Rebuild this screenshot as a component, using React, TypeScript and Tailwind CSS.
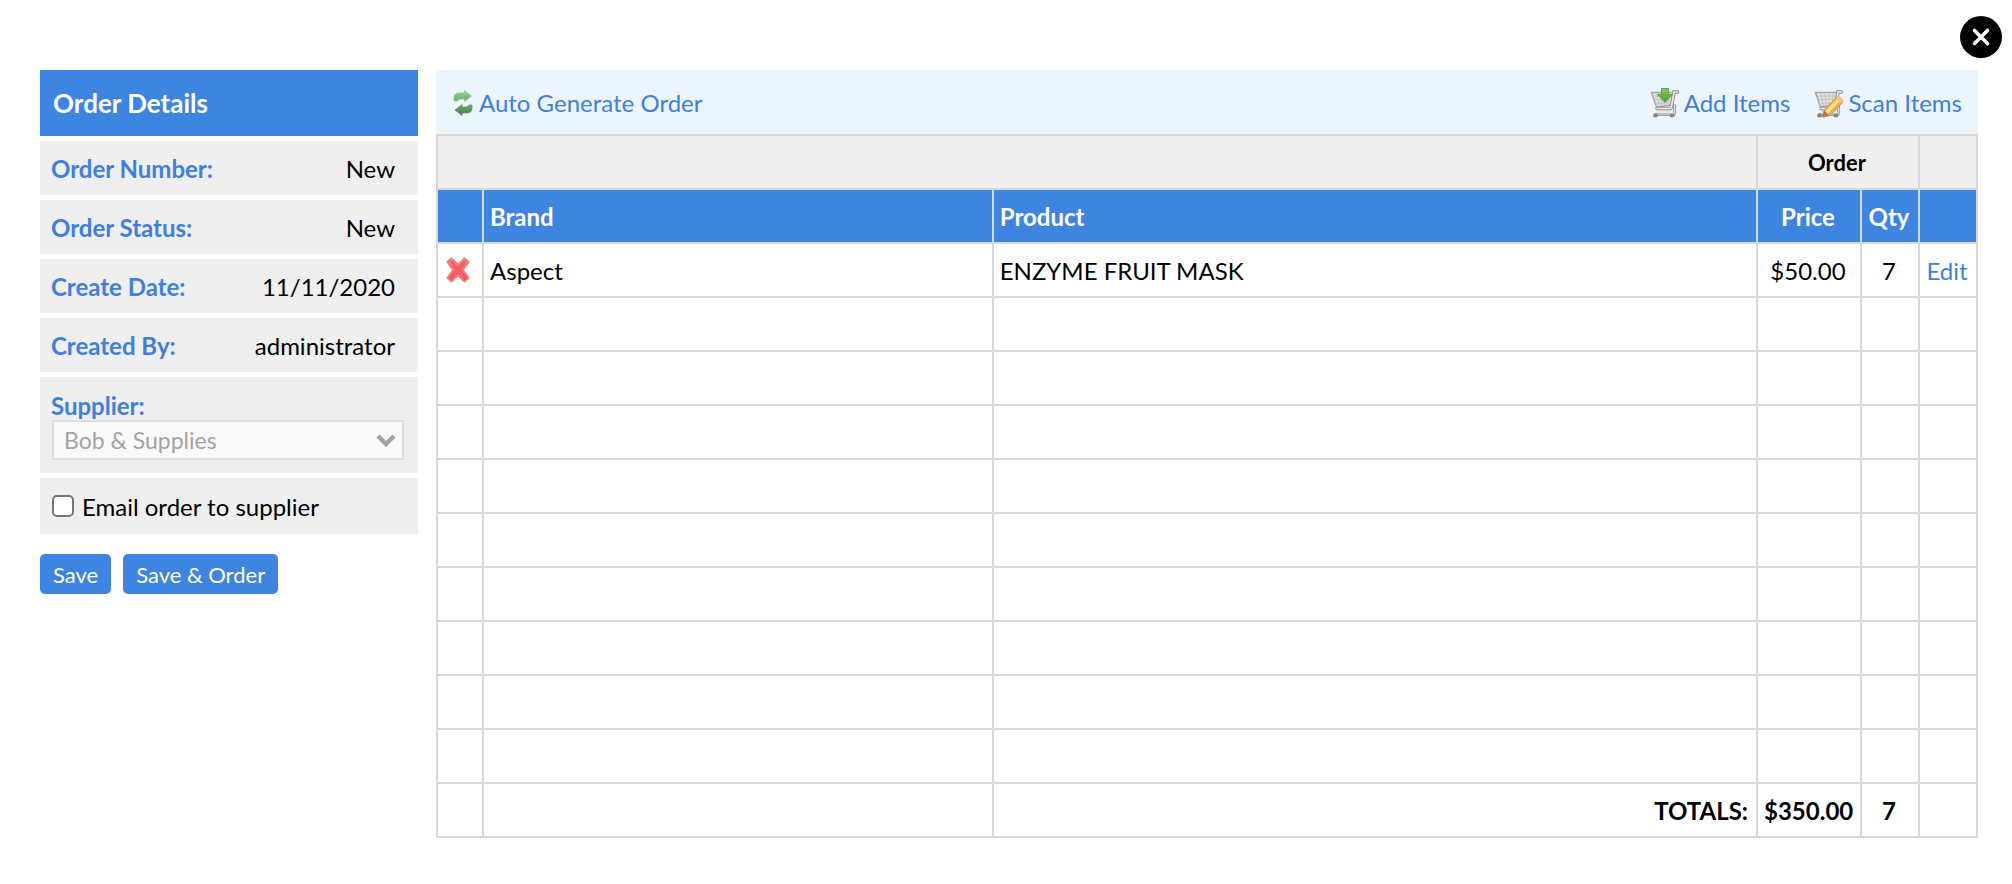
import { useState } from 'react';

interface OrderItem {
  brand: string;
  product: string;
  price: number;
  qty: number;
}

const MIN_ROWS = 10;

const details = [
  { label: 'Order Number:', value: 'New' },
  { label: 'Order Status:', value: 'New' },
  { label: 'Create Date:', value: '11/11/2020' },
  { label: 'Created By:', value: 'administrator' },
];

const initialItems: OrderItem[] = [
  { brand: 'Aspect', product: 'ENZYME FRUIT MASK', price: 50, qty: 7 },
];

const money = (n: number) => `$${n.toFixed(2)}`;

function CloseIcon() {
  return (
    <svg viewBox="0 0 42 42" className="size-[42px]" aria-hidden="true">
      <circle cx="21" cy="21" r="21" fill="#000" />
      <path d="M14.500 14.500l13 13M27.500 14.500l-13 13" stroke="#fff" strokeWidth="3.600" strokeLinecap="round" />
    </svg>
  );
}

function RefreshIcon() {
  return (
    <svg viewBox="0 0 20 26" className="w-5 h-[26px]" aria-hidden="true">
      <defs>
        <linearGradient id="refreshTop" x1="0" y1="0" x2="0" y2="1">
          <stop offset="0" stopColor="#a5dba0" />
          <stop offset="1" stopColor="#63a95f" />
        </linearGradient>
        <linearGradient id="refreshBottom" x1="0" y1="0" x2="0" y2="1">
          <stop offset="0" stopColor="#6db069" />
          <stop offset="1" stopColor="#377f3a" />
        </linearGradient>
      </defs>
      <path
        d="M1 11V7.500Q1.500 3 6 3h5.500V.5l7 5.500-7 5.500V9H7.500Q5 9 4.500 11Z"
        fill="url(#refreshTop)"
        stroke="#8cc489"
        strokeWidth="0.800"
      />
      <path
        d="M19 15v3.500q-.5 4.500-5 4.500H9v2.500L2 20l7-5.500V17h3.500q3 0 3.500-2Z"
        fill="url(#refreshBottom)"
        stroke="#5b9c5b"
        strokeWidth="0.800"
      />
    </svg>
  );
}

function Cart() {
  return (
    <g>
      <path d="M1.500 5.500H23l-2 12.500-14.500 2Z" fill="#e3e3e3" stroke="#a6a6a6" strokeWidth="1.500" />
      <path
        d="M4 9h17M5 12.500h15M6.500 16h13M7 7l2 11M11 7l1 11M15 7v11M19 7l-1 10"
        stroke="#c2c2c2"
        strokeWidth="1"
        fill="none"
      />
      <path d="M6 21h15.500v7H6.500Z" fill="#e6e6e6" />
      <path d="M27.500 5h-3.500l-2.500 14.500q-.3 2-2 2H7" stroke="#909090" strokeWidth="3.600" strokeLinecap="round" fill="none" />
      <path d="M27.500 5h-3.500l-2.500 14.500q-.3 2-2 2H7" stroke="#ececec" strokeWidth="1.600" strokeLinecap="round" fill="none" />
      <path d="M24.500 18.500v7q0 2-2 2H5.500" stroke="#a0a0a0" strokeWidth="3.200" strokeLinecap="round" fill="none" />
      <path d="M24.500 18.500v7q0 1.500-2 1.500H7" stroke="#dedede" strokeWidth="1.200" strokeLinecap="round" fill="none" />
      <ellipse cx="5.500" cy="28.500" rx="2.500" ry="2" fill="#858585" />
      <ellipse cx="22" cy="28.500" rx="2.500" ry="2" fill="#858585" />
    </g>
  );
}

function CartAddIcon() {
  return (
    <svg viewBox="0 0 30 32" className="w-[30px] h-8" aria-hidden="true">
      <defs>
        <linearGradient id="addArrow" x1="0" y1="0" x2="0" y2="1">
          <stop offset="0" stopColor="#8cc861" />
          <stop offset="1" stopColor="#4d9c36" />
        </linearGradient>
      </defs>
      <Cart />
      <path d="M11.500 1.500h7v6h4L15 15.500 7.500 7.500h4Z" fill="url(#addArrow)" stroke="#64a04d" strokeWidth="1" />
    </svg>
  );
}

function CartEditIcon() {
  return (
    <svg viewBox="0 0 30 32" className="w-[30px] h-8" aria-hidden="true">
      <Cart />
      <path
        d="M9 30l1-6.500L22.500 10.500q1.500-1.500 3.500 0l2 2q1.500 2 0 3.500L16 28.500Z"
        fill="#efae4c"
        stroke="#cf9147"
        strokeWidth="1"
      />
      <path d="M13.500 24.500L24 13.500" stroke="#ffe08a" strokeWidth="3.500" strokeLinecap="round" />
      <path d="M8 30.500l2-7 5.500 5Z" fill="#b07c46" />
      <path d="M22 11l1.500-1.200q2-1.300 4 .7t1 4.500l-1.500 1.500Z" fill="#f3bf8c" />
    </svg>
  );
}

function DeleteIcon() {
  return (
    <svg viewBox="0 0 24 26" className="w-6 h-[26px]" aria-hidden="true">
      <defs>
        <linearGradient id="deleteCross" x1="0" y1="0" x2="0" y2="1">
          <stop offset="0" stopColor="#fb8585" />
          <stop offset="1" stopColor="#ea4147" />
        </linearGradient>
      </defs>
      <path
        d="M5.500 1.500L12 8l6.500-6.500L22.500 5 17 13l5.500 8-4 3.500L12 18l-6.500 6.500L1.500 21 7 13 1.500 5Z"
        fill="url(#deleteCross)"
        stroke="#f47c7e"
        strokeWidth="2"
        strokeLinejoin="round"
      />
      <path d="M6 5.500l12 15M18 5.500l-12 15" stroke="#f55f63" strokeWidth="3" strokeLinecap="round" />
    </svg>
  );
}

function OrderDetails() {
  const [emailSupplier, setEmailSupplier] = useState(false);

  return (
    <aside className="w-[378px] shrink-0">
      <h2 className="h-[66px] pl-[13px] flex items-center bg-[#3e85e2] text-white text-[26px] font-bold">
        Order Details
      </h2>

      <dl className="mt-[5px] space-y-[5px]">
        {details.map((d) => (
          <div key={d.label} className="h-[54px] pt-0.5 pl-[11px] pr-[23px] flex items-center justify-between bg-[#efefef]">
            <dt className="text-[#3e7fe2] font-bold">{d.label}</dt>
            <dd>{d.value}</dd>
          </div>
        ))}
      </dl>

      <div className="mt-[5px] h-24 px-3 pt-[15px] bg-[#efefef]">
        <label htmlFor="supplier" className="-ml-px block leading-7 text-[#3e7fe2] font-bold">
          Supplier:
        </label>
        <div className="relative mr-[2px]">
          <select
            id="supplier"
            disabled
            className="block w-full h-10 pl-[10px] appearance-none border-2 border-[#dedede] bg-[#fafafa] text-[23px] text-[#a3a3a3] opacity-100"
          >
            <option>Bob &amp; Supplies</option>
          </select>
          <svg viewBox="0 0 20 13" className="absolute right-2 top-3.5 w-5 h-[13px] pointer-events-none" aria-hidden="true">
            <path d="M2 2l8 8 8-8" fill="none" stroke="#a3a3a3" strokeWidth="4.500" />
          </svg>
        </div>
      </div>

      <div className="mt-[5px] h-14 px-3 flex items-center gap-2 bg-[#efefef]">
        <input
          id="email-supplier"
          type="checkbox"
          checked={emailSupplier}
          onChange={(e) => setEmailSupplier(e.target.checked)}
          className="size-[22px] appearance-none rounded-[5px] border-2 border-[#767676] bg-white checked:bg-[#3e85e2]"
        />
        <label htmlFor="email-supplier" className="pt-0.5">
          Email order to supplier
        </label>
      </div>

      <div className="mt-5 flex gap-3 text-[22px] text-white">
        <button type="button" className="h-10 px-[13px] pt-0.5 rounded-[5px] bg-[#3e85e2]">
          Save
        </button>
        <button type="button" className="h-10 px-[13px] pt-0.5 rounded-[5px] bg-[#3e85e2]">
          Save &amp; Order
        </button>
      </div>
    </aside>
  );
}

function OrderTable() {
  const [items, setItems] = useState(initialItems);

  const totalQty = items.reduce((sum, i) => sum + i.qty, 0);
  const totalPrice = items.reduce((sum, i) => sum + i.qty * i.price, 0);
  const emptyRows = Math.max(0, MIN_ROWS - items.length);

  const cell = 'border-2 border-[#d8d8d8] pt-0.5 pl-1.5 pr-2';

  return (
    <table className="w-full table-fixed border-collapse">
      <colgroup>
        <col className="w-[46px]" />
        <col className="w-[33.1%]" />
        <col />
        <col className="w-[104px]" />
        <col className="w-[58px]" />
        <col className="w-[58px]" />
      </colgroup>
      <thead>
        <tr className="h-[54px] bg-[#efefef]">
          <td colSpan={3} className={cell} />
          <th colSpan={2} className={`${cell} text-[22px] font-bold`}>
            Order
          </th>
          <td className={cell} />
        </tr>
        <tr className="h-[54px] bg-[#3e85e2] text-white font-bold">
          <td className={cell} />
          <th className={`${cell} text-left`}>Brand</th>
          <th className={`${cell} text-left`}>Product</th>
          <th className={cell}>Price</th>
          <th className={cell}>Qty</th>
          <td className={cell} />
        </tr>
      </thead>
      <tbody>
        {items.map((item, index) => (
          <tr key={item.product} className="h-[54px]">
            <td className="border-2 border-[#d8d8d8] pr-1">
              <button
                type="button"
                aria-label="Remove item"
                className="mx-auto block"
                onClick={() => setItems(items.filter((_, i) => i !== index))}
              >
                <DeleteIcon />
              </button>
            </td>
            <td className={cell}>{item.brand}</td>
            <td className={cell}>{item.product}</td>
            <td className={`${cell} text-center`}>{money(item.price)}</td>
            <td className={`${cell} text-center`}>{item.qty}</td>
            <td className={`${cell} text-center`}>
              <a href="#edit" className="text-[#3e7fe2]">
                Edit
              </a>
            </td>
          </tr>
        ))}
        {Array.from({ length: emptyRows }, (_, i) => (
          <tr key={i} className="h-[54px]">
            <td className={cell} />
            <td className={cell} />
            <td className={cell} />
            <td className={cell} />
            <td className={cell} />
            <td className={cell} />
          </tr>
        ))}
      </tbody>
      <tfoot>
        <tr className="h-[54px] font-bold">
          <td className={cell} />
          <td className={cell} />
          <td className={`${cell} text-right`}>TOTALS:</td>
          <td className={`${cell} text-center`}>{money(totalPrice)}</td>
          <td className={`${cell} text-center`}>{totalQty}</td>
          <td className={cell} />
        </tr>
      </tfoot>
    </table>
  );
}

export default function App() {
  return (
    <div className="min-h-screen bg-white pt-4 font-['Lato',sans-serif] text-2xl text-black">
      <div className="flex justify-end pr-[10px]">
        <button type="button" aria-label="Close">
          <CloseIcon />
        </button>
      </div>

      <div className="mt-3 pl-10 pr-[34px] flex items-start gap-[18px]">
        <OrderDetails />

        <main className="flex-1 min-w-0">
          <div className="h-16 pt-0.5 pl-[17px] pr-4 flex items-center justify-between bg-[#edf5fc] text-[#3e7fe2]">
            <a href="#generate" className="flex items-center gap-1.5">
              <RefreshIcon />
              Auto Generate Order
            </a>
            <div className="flex items-center gap-6">
              <a href="#add" className="flex items-center gap-1">
                <CartAddIcon />
                Add Items
              </a>
              <a href="#scan" className="flex items-center gap-1">
                <CartEditIcon />
                Scan Items
              </a>
            </div>
          </div>
          <OrderTable />
        </main>
      </div>
    </div>
  );
}
